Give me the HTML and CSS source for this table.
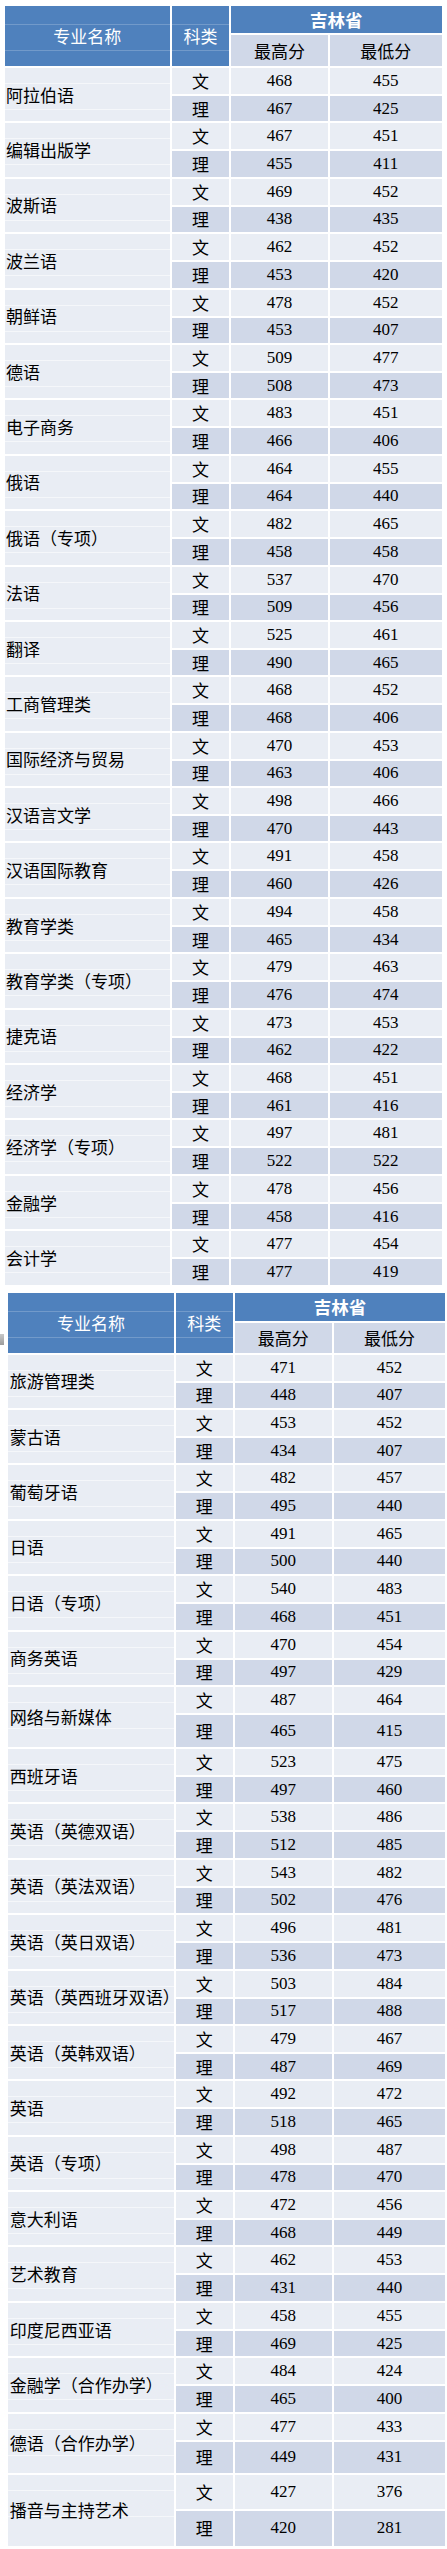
FILE: index.html
```html
<!DOCTYPE html>
<html lang="zh-CN">
<head>
<meta charset="utf-8">
<title>吉林省录取分数</title>
<link rel="stylesheet" href="styles.css">
</head>
<body>
<div class="sheet sheet-a">
  <div class="score-table">
    <div class="h-name">专业名称</div>
    <div class="h-type">科类</div>
    <div class="h-prov">吉林省</div>
    <div class="h-sub">最高分</div>
    <div class="h-sub">最低分</div>

    <div class="name">阿拉伯语</div>
    <div class="c wen">文</div><div class="c wen num">468</div><div class="c wen num">455</div>
    <div class="c li">理</div><div class="c li num">467</div><div class="c li num">425</div>

    <div class="name">编辑出版学</div>
    <div class="c wen">文</div><div class="c wen num">467</div><div class="c wen num">451</div>
    <div class="c li">理</div><div class="c li num">455</div><div class="c li num">411</div>

    <div class="name">波斯语</div>
    <div class="c wen">文</div><div class="c wen num">469</div><div class="c wen num">452</div>
    <div class="c li">理</div><div class="c li num">438</div><div class="c li num">435</div>

    <div class="name">波兰语</div>
    <div class="c wen">文</div><div class="c wen num">462</div><div class="c wen num">452</div>
    <div class="c li">理</div><div class="c li num">453</div><div class="c li num">420</div>

    <div class="name">朝鲜语</div>
    <div class="c wen">文</div><div class="c wen num">478</div><div class="c wen num">452</div>
    <div class="c li">理</div><div class="c li num">453</div><div class="c li num">407</div>

    <div class="name">德语</div>
    <div class="c wen">文</div><div class="c wen num">509</div><div class="c wen num">477</div>
    <div class="c li">理</div><div class="c li num">508</div><div class="c li num">473</div>

    <div class="name">电子商务</div>
    <div class="c wen">文</div><div class="c wen num">483</div><div class="c wen num">451</div>
    <div class="c li">理</div><div class="c li num">466</div><div class="c li num">406</div>

    <div class="name">俄语</div>
    <div class="c wen">文</div><div class="c wen num">464</div><div class="c wen num">455</div>
    <div class="c li">理</div><div class="c li num">464</div><div class="c li num">440</div>

    <div class="name">俄语（专项）</div>
    <div class="c wen">文</div><div class="c wen num">482</div><div class="c wen num">465</div>
    <div class="c li">理</div><div class="c li num">458</div><div class="c li num">458</div>

    <div class="name">法语</div>
    <div class="c wen">文</div><div class="c wen num">537</div><div class="c wen num">470</div>
    <div class="c li">理</div><div class="c li num">509</div><div class="c li num">456</div>

    <div class="name">翻译</div>
    <div class="c wen">文</div><div class="c wen num">525</div><div class="c wen num">461</div>
    <div class="c li">理</div><div class="c li num">490</div><div class="c li num">465</div>

    <div class="name">工商管理类</div>
    <div class="c wen">文</div><div class="c wen num">468</div><div class="c wen num">452</div>
    <div class="c li">理</div><div class="c li num">468</div><div class="c li num">406</div>

    <div class="name">国际经济与贸易</div>
    <div class="c wen">文</div><div class="c wen num">470</div><div class="c wen num">453</div>
    <div class="c li">理</div><div class="c li num">463</div><div class="c li num">406</div>

    <div class="name">汉语言文学</div>
    <div class="c wen">文</div><div class="c wen num">498</div><div class="c wen num">466</div>
    <div class="c li">理</div><div class="c li num">470</div><div class="c li num">443</div>

    <div class="name">汉语国际教育</div>
    <div class="c wen">文</div><div class="c wen num">491</div><div class="c wen num">458</div>
    <div class="c li">理</div><div class="c li num">460</div><div class="c li num">426</div>

    <div class="name">教育学类</div>
    <div class="c wen">文</div><div class="c wen num">494</div><div class="c wen num">458</div>
    <div class="c li">理</div><div class="c li num">465</div><div class="c li num">434</div>

    <div class="name">教育学类（专项）</div>
    <div class="c wen">文</div><div class="c wen num">479</div><div class="c wen num">463</div>
    <div class="c li">理</div><div class="c li num">476</div><div class="c li num">474</div>

    <div class="name">捷克语</div>
    <div class="c wen">文</div><div class="c wen num">473</div><div class="c wen num">453</div>
    <div class="c li">理</div><div class="c li num">462</div><div class="c li num">422</div>

    <div class="name">经济学</div>
    <div class="c wen">文</div><div class="c wen num">468</div><div class="c wen num">451</div>
    <div class="c li">理</div><div class="c li num">461</div><div class="c li num">416</div>

    <div class="name">经济学（专项）</div>
    <div class="c wen">文</div><div class="c wen num">497</div><div class="c wen num">481</div>
    <div class="c li">理</div><div class="c li num">522</div><div class="c li num">522</div>

    <div class="name">金融学</div>
    <div class="c wen">文</div><div class="c wen num">478</div><div class="c wen num">456</div>
    <div class="c li">理</div><div class="c li num">458</div><div class="c li num">416</div>

    <div class="name">会计学</div>
    <div class="c wen">文</div><div class="c wen num">477</div><div class="c wen num">454</div>
    <div class="c li">理</div><div class="c li num">477</div><div class="c li num">419</div>
  </div>
</div>

<div class="sheet sheet-b">
  <div class="handle"></div>
  <div class="score-table score-table-b">
    <div class="h-name">专业名称</div>
    <div class="h-type">科类</div>
    <div class="h-prov">吉林省</div>
    <div class="h-sub">最高分</div>
    <div class="h-sub">最低分</div>

    <div class="name">旅游管理类</div>
    <div class="c wen">文</div><div class="c wen num">471</div><div class="c wen num">452</div>
    <div class="c li">理</div><div class="c li num">448</div><div class="c li num">407</div>

    <div class="name">蒙古语</div>
    <div class="c wen">文</div><div class="c wen num">453</div><div class="c wen num">452</div>
    <div class="c li">理</div><div class="c li num">434</div><div class="c li num">407</div>

    <div class="name">葡萄牙语</div>
    <div class="c wen">文</div><div class="c wen num">482</div><div class="c wen num">457</div>
    <div class="c li">理</div><div class="c li num">495</div><div class="c li num">440</div>

    <div class="name">日语</div>
    <div class="c wen">文</div><div class="c wen num">491</div><div class="c wen num">465</div>
    <div class="c li">理</div><div class="c li num">500</div><div class="c li num">440</div>

    <div class="name">日语（专项）</div>
    <div class="c wen">文</div><div class="c wen num">540</div><div class="c wen num">483</div>
    <div class="c li">理</div><div class="c li num">468</div><div class="c li num">451</div>

    <div class="name">商务英语</div>
    <div class="c wen">文</div><div class="c wen num">470</div><div class="c wen num">454</div>
    <div class="c li">理</div><div class="c li num">497</div><div class="c li num">429</div>

    <div class="name">网络与新媒体</div>
    <div class="c wen">文</div><div class="c wen num">487</div><div class="c wen num">464</div>
    <div class="c li tall-32">理</div><div class="c li num tall-32">465</div><div class="c li num tall-32">415</div>

    <div class="name">西班牙语</div>
    <div class="c wen">文</div><div class="c wen num">523</div><div class="c wen num">475</div>
    <div class="c li">理</div><div class="c li num">497</div><div class="c li num">460</div>

    <div class="name">英语（英德双语）</div>
    <div class="c wen">文</div><div class="c wen num">538</div><div class="c wen num">486</div>
    <div class="c li">理</div><div class="c li num">512</div><div class="c li num">485</div>

    <div class="name">英语（英法双语）</div>
    <div class="c wen">文</div><div class="c wen num">543</div><div class="c wen num">482</div>
    <div class="c li">理</div><div class="c li num">502</div><div class="c li num">476</div>

    <div class="name">英语（英日双语）</div>
    <div class="c wen">文</div><div class="c wen num">496</div><div class="c wen num">481</div>
    <div class="c li">理</div><div class="c li num">536</div><div class="c li num">473</div>

    <div class="name">英语（英西班牙双语）</div>
    <div class="c wen">文</div><div class="c wen num">503</div><div class="c wen num">484</div>
    <div class="c li">理</div><div class="c li num">517</div><div class="c li num">488</div>

    <div class="name">英语（英韩双语）</div>
    <div class="c wen">文</div><div class="c wen num">479</div><div class="c wen num">467</div>
    <div class="c li">理</div><div class="c li num">487</div><div class="c li num">469</div>

    <div class="name">英语</div>
    <div class="c wen">文</div><div class="c wen num">492</div><div class="c wen num">472</div>
    <div class="c li">理</div><div class="c li num">518</div><div class="c li num">465</div>

    <div class="name">英语（专项）</div>
    <div class="c wen">文</div><div class="c wen num">498</div><div class="c wen num">487</div>
    <div class="c li">理</div><div class="c li num">478</div><div class="c li num">470</div>

    <div class="name">意大利语</div>
    <div class="c wen">文</div><div class="c wen num">472</div><div class="c wen num">456</div>
    <div class="c li">理</div><div class="c li num">468</div><div class="c li num">449</div>

    <div class="name">艺术教育</div>
    <div class="c wen">文</div><div class="c wen num">462</div><div class="c wen num">453</div>
    <div class="c li">理</div><div class="c li num">431</div><div class="c li num">440</div>

    <div class="name">印度尼西亚语</div>
    <div class="c wen">文</div><div class="c wen num">458</div><div class="c wen num">455</div>
    <div class="c li">理</div><div class="c li num">469</div><div class="c li num">425</div>

    <div class="name">金融学（合作办学）</div>
    <div class="c wen">文</div><div class="c wen num">484</div><div class="c wen num">424</div>
    <div class="c li">理</div><div class="c li num">465</div><div class="c li num">400</div>

    <div class="name">德语（合作办学）</div>
    <div class="c wen">文</div><div class="c wen num">477</div><div class="c wen num">433</div>
    <div class="c li tall-31">理</div><div class="c li num tall-31">449</div><div class="c li num tall-31">431</div>

    <div class="name">播音与主持艺术</div>
    <div class="c wen tall-34">文</div><div class="c wen num tall-34">427</div><div class="c wen num tall-34">376</div>
    <div class="c li tall-35">理</div><div class="c li num tall-35">420</div><div class="c li num tall-35">281</div>
  </div>
</div>
</body>
</html>
```

FILE: styles.css
```css
* {
  box-sizing: border-box;
}

body {
  margin: 0;
  background: #ffffff;
  font-family: "Noto Sans CJK SC", "Noto Sans", sans-serif;
  color: #000000;
}

.sheet-a {
  padding: 6px 0 0 4.5px;
}

.sheet-b {
  display: flex;
  align-items: flex-start;
  margin-top: 8px;
}

.handle {
  flex: none;
  width: 4px;
  height: 11px;
  margin-top: 41.6px;
  background: linear-gradient(to bottom, #c8c8c8, #9c9c9c);
}

.sheet-b .score-table {
  margin-left: 4.3px;
}

.score-table {
  display: grid;
  grid-template-columns: 165.5px 57px 97px 111.5px;
  grid-template-rows: 27px 31px;
  grid-auto-rows: minmax(26px, auto) minmax(25.4px, auto);
  gap: 2px;
  font-size: 17px;
  line-height: 20px;
}

.score-table-b {
  grid-template-rows: 28px 30px;
}

.score-table > div {
  display: flex;
  align-items: center;
  justify-content: center;
  white-space: nowrap;
}

.h-name,
.h-type {
  grid-row: span 2;
  color: #ffffff;
  background-color: #4f81bd;
  background-image: linear-gradient(to bottom,
    transparent 18px, rgba(255, 255, 255, 0.2) 18px,
    rgba(255, 255, 255, 0.2) 19px, transparent 19px,
    transparent 44px, rgba(255, 255, 255, 0.2) 44px,
    rgba(255, 255, 255, 0.2) 45px, transparent 45px);
}

.h-prov {
  grid-column: span 2;
  color: #ffffff;
  background: #4f81bd;
  font-weight: 700;
  font-size: 17.5px;
}

.h-sub {
  background: #d0d8e8;
}

.score-table > .name {
  grid-row: span 2;
  justify-content: flex-start;
  padding-left: 1.5px;
  background-color: #e9edf4;
  background-image: linear-gradient(to bottom,
    transparent 15px, rgba(255, 255, 255, 0.55) 15px,
    rgba(255, 255, 255, 0.55) 16px, transparent 16px,
    transparent 41px, rgba(255, 255, 255, 0.55) 41px,
    rgba(255, 255, 255, 0.55) 42px, transparent 42px);
}

.wen {
  background: #e9edf4;
}

.li {
  background: #d0d8e8;
}

.num {
  font-family: "Liberation Serif", "Times New Roman", serif;
  font-size: 17px;
}

.tall-31 {
  min-height: 31px;
}

.tall-32 {
  min-height: 32px;
}

.tall-34 {
  min-height: 34px;
}

.tall-35 {
  min-height: 35px;
}
```
